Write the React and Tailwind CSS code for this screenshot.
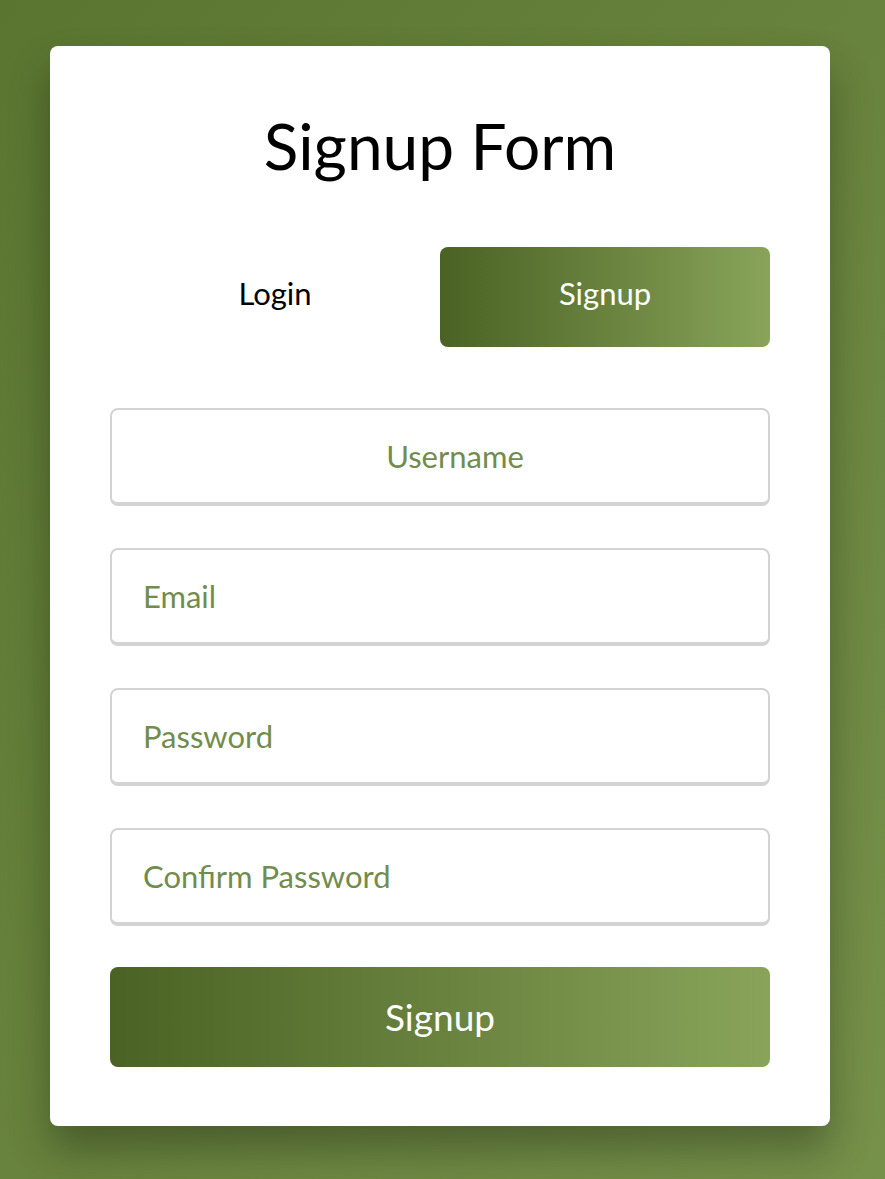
import { useState } from "react";

export default function App() {
  const [tab, setTab] = useState("signup");
  const fields = [
    { name: "username", label: "Username", type: "text", center: true },
    { name: "email", label: "Email", type: "email" },
    { name: "password", label: "Password", type: "password" },
    { name: "confirm", label: "Confirm Password", type: "password" },
  ];

  return (
    <div className="min-h-screen bg-gradient-to-br from-[#5a7530] to-[#76914a] pt-[46px] pb-[53px] font-['Lato',sans-serif]">
      <div className="ml-[50px] w-[780px] rounded-lg bg-white px-[60px] pt-[60px] pb-[59px] shadow-[0_24px_40px_rgba(0,0,0,0.3)]">
        <h1 className="text-center text-[64px] leading-[80px] font-normal text-black">
          Signup Form
        </h1>

        <div className="mt-[61px] grid grid-cols-2">
          <button
            onClick={() => setTab("login")}
            className={`h-[100px] rounded-lg pb-2 text-[31px] ${
              tab === "login"
                ? "bg-gradient-to-r from-[#4a6223] to-[#89a45a] text-white"
                : "text-black"
            }`}
          >
            Login
          </button>
          <button
            onClick={() => setTab("signup")}
            className={`h-[100px] rounded-lg pb-2 text-[31px] ${
              tab === "signup"
                ? "bg-gradient-to-r from-[#4a6223] to-[#89a45a] text-white"
                : "text-black"
            }`}
          >
            Signup
          </button>
        </div>

        <form className="mt-[61px] flex flex-col gap-[42px]">
          {fields.map((f) => (
            <input
              key={f.name}
              type={f.type}
              placeholder={f.label}
              className={`h-[98px] w-full rounded-lg border-2 border-b-4 border-[#d3d3d3] bg-white pr-[31px] text-[31px] text-[#6f8a4a] outline-none placeholder:text-[#728c4c] ${
                f.center ? "pl-[61px] text-center" : "pl-[31px]"
              }`}
            />
          ))}
          <button
            type="button"
            className="-mt-px h-[100px] w-full rounded-lg bg-gradient-to-r from-[#4a6223] to-[#89a45a] text-[37px] text-white"
          >
            Signup
          </button>
        </form>
      </div>
    </div>
  );
}
